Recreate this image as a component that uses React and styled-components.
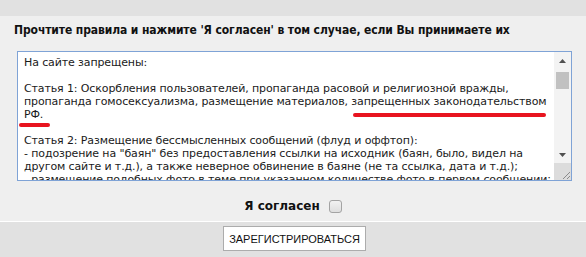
import React from "react";
import styled, { createGlobalStyle } from "styled-components";

const GlobalStyle = createGlobalStyle`
  html, body {
    margin: 0;
    padding: 0;
    background: #e1e1e1;
  }
`;

const Page = styled.div`
  padding-top: 16px;
  font-family: "DejaVu Sans", Verdana, sans-serif;
  color: #000;
`;

const Panel = styled.div`
  background: #efefef;
  border-bottom: 1px solid #ffffff;
  padding: 7px 14px 0 17px;
  height: 198px;
  box-sizing: content-box;
  display: flex;
  flex-direction: column;
`;

const Title = styled.h2`
  margin: 0 0 13px -3px;
  font-family: "DejaVu Sans Condensed", "DejaVu Sans", sans-serif;
  font-weight: bold;
  font-size: 12px;
  letter-spacing: -0.1px;
  line-height: 15px;
  color: #111;
  white-space: nowrap;
`;

const RulesBox = styled.div`
  position: relative;
  width: 555px;
  height: 130px;
  box-sizing: border-box;
  border: 1px solid #7fa3d6;
  background: #fff;
  display: flex;
`;

const Rules = styled.textarea`
  flex: 1;
  border: none;
  outline: none;
  resize: none;
  margin: 0;
  padding: 4px 6px;
  overflow: hidden;
  white-space: pre;
  font-family: "DejaVu Sans", Verdana, sans-serif;
  font-size: 11px;
  letter-spacing: -0.12px;
  line-height: 13px;
  color: #1a1a1a;
  background: #fff;
`;

const ScrollBar = styled.div`
  width: 17px;
  display: flex;
  flex-direction: column;
  background: #f3f3f3;
`;

const Arrow = styled.div`
  height: 17px;
  display: flex;
  align-items: center;
  justify-content: center;
`;

const Track = styled.div`
  flex: 1;
  padding: 3px 2px 0 2px;
`;

const Thumb = styled.div`
  height: 17px;
  background: #c1c1c1;
`;

const Corner = styled.div`
  height: 17px;
  background: #dcdcdc;
  display: flex;
  align-items: flex-end;
  justify-content: flex-end;
`;

const Marker = styled.span`
  position: absolute;
  height: 4px;
  border-radius: 2px;
  background: #e8141f;
`;

const AgreeRow = styled.label`
  display: flex;
  align-items: center;
  justify-content: center;
  gap: 9px;
  margin-top: 18px;
  margin-left: -17px;
  margin-right: -14px;
  font-family: "DejaVu Sans", Verdana, sans-serif;
  font-weight: bold;
  font-size: 12px;
  color: #111;
`;

const Check = styled.input.attrs(() => ({ type: "checkbox" }))`
  appearance: none;
  margin: 0;
  width: 13px;
  height: 13px;
  box-sizing: border-box;
  border: 1px solid #a3a3a3;
  border-radius: 3px;
  background: linear-gradient(#f2f2f2, #dedede);
`;

const Footer = styled.div`
  display: flex;
  justify-content: center;
  padding-top: 4px;
  padding-left: 3px;
`;

const Button = styled.button`
  height: 25px;
  width: 143px;
  padding: 0;
  background: #fff;
  border: 1px solid #acacac;
  border-radius: 0;
  font-family: "Liberation Sans", Arial, sans-serif;
  font-size: 11px;
  color: #111;
  cursor: pointer;
`;

const rulesText = `На сайте запрещены:

Статья 1: Оскорбления пользователей, пропаганда расовой и религиозной вражды,
пропаганда гомосексуализма, размещение материалов, запрещенных законодательством
РФ.

Статья 2: Размещение бессмысленных сообщений (флуд и оффтоп):
- подозрение на "баян" без предоставления ссылки на исходник (баян, было, видел на
другом сайте и т.д.), а также неверное обвинение в баяне (не та ссылка, дата и т.д.);
- размещение подобных фото в теме при указанном количестве фото в первом сообщении;`;

const Triangle = ({ down }) => (
  <svg width="7" height="4" viewBox="0 0 7 4">
    <polygon
      points={down ? "0,0 7,0 3.5,4" : "0,4 7,4 3.5,0"}
      fill="#505050"
    />
  </svg>
);

const Grip = () => (
  <svg width="10" height="10" viewBox="0 0 10 10">
    <line x1="9" y1="2" x2="2" y2="9" stroke="#8a8a8a" strokeWidth="1" />
    <line x1="9" y1="6" x2="6" y2="9" stroke="#8a8a8a" strokeWidth="1" />
  </svg>
);

export default function App() {
  return (
    <Page>
      <GlobalStyle />
      <Panel>
        <Title>
          Прочтите правила и нажмите 'Я согласен' в том случае, если Вы
          принимаете их
        </Title>
        <RulesBox>
          <Rules readOnly defaultValue={rulesText} />
          <ScrollBar>
            <Arrow>
              <Triangle />
            </Arrow>
            <Track>
              <Thumb />
            </Track>
            <Arrow>
              <Triangle down />
            </Arrow>
            <Corner>
              <Grip />
            </Corner>
          </ScrollBar>
          <Marker style={{ left: 1, top: 71, width: 31 }} />
          <Marker style={{ left: 335, top: 61, width: 193 }} />
        </RulesBox>
        <AgreeRow>
          Я согласен
          <Check />
        </AgreeRow>
      </Panel>
      <Footer>
        <Button>ЗАРЕГИСТРИРОВАТЬСЯ</Button>
      </Footer>
    </Page>
  );
}
